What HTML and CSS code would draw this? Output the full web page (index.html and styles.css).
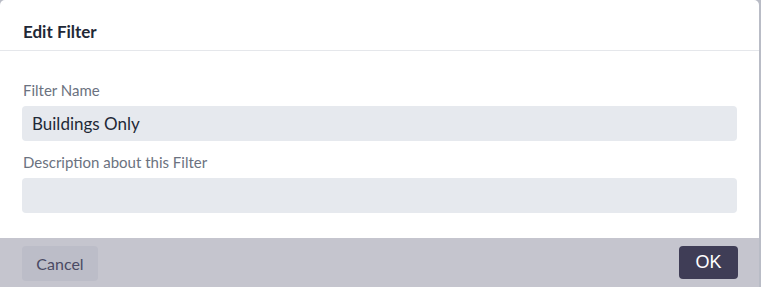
FILE: index.html
```html
<!DOCTYPE html>
<html>
<head>
<meta charset="utf-8">
<link rel="stylesheet" href="styles.css">
</head>
<body>
<div class="modal">
  <div class="modal-header">
    <h2 class="title">Edit Filter</h2>
  </div>
  <div class="modal-body">
    <label class="field">
      <span class="label">Filter Name</span>
      <span class="input">Buildings Only</span>
    </label>
    <label class="field">
      <span class="label">Description about this Filter</span>
      <span class="input"></span>
    </label>
  </div>
  <div class="modal-footer">
    <button class="btn btn-cancel">Cancel</button>
    <button class="btn btn-ok">OK</button>
  </div>
</div>
</body>
</html>
```

FILE: styles.css
```css
html, body {
  margin: 0;
  padding: 0;
}
body {
  background: #b9bcc6;
  width: 761px;
  height: 287px;
  overflow: hidden;
  font-family: Lato, "Open Sans", sans-serif;
}
.modal {
  width: 759px;
  height: 287px;
  background: #ffffff;
  border-radius: 5px 5px 0 0;
  display: flex;
  flex-direction: column;
  overflow: hidden;
}
.modal-header {
  height: 51px;
  border-bottom: 1px solid #e5e7eb;
  box-sizing: border-box;
  padding: 0 23px;
  display: flex;
  align-items: center;
}
.title {
  margin: 0;
  font-size: 17px;
  font-weight: 700;
  color: #1f2937;
  padding-top: 12px;
}
.modal-body {
  padding: 30px 22px 0;
  height: 187px;
  box-sizing: border-box;
  display: flex;
  flex-direction: column;
  gap: 12px;
}
.field {
  display: flex;
  flex-direction: column;
  gap: 7px;
}
.label {
  font-size: 15px;
  color: #6b7280;
  line-height: 18px;
  padding-left: 1px;
}
.input {
  height: 35px;
  background: #e6e9ee;
  border-radius: 4px;
  box-sizing: border-box;
  padding: 0 10px;
  display: flex;
  align-items: center;
  font-size: 17px;
  color: #1f2937;
}
.modal-footer {
  flex: 1;
  background: #c5c5ce;
  display: flex;
  justify-content: space-between;
  align-items: flex-start;
  padding: 8px 21px 0 22px;
}
.btn {
  border: none;
  border-radius: 4px;
  cursor: pointer;
}
.btn-cancel {
  width: 76px;
  height: 35px;
  background: #bcbdc8;
  color: #4a4a63;
  font-family: Lato, sans-serif;
  font-size: 16px;
}
.btn-ok {
  width: 59px;
  height: 33px;
  background: #3f3d56;
  color: #ffffff;
  font-family: "Liberation Sans", Arial, sans-serif;
  font-size: 18px;
}
```
